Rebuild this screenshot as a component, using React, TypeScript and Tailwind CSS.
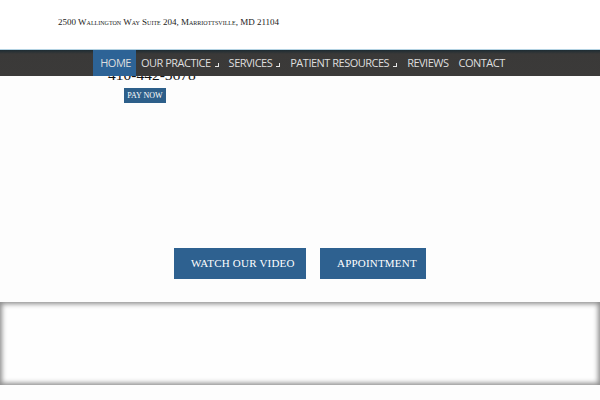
import React from "react";

const serif = { fontFamily: '"Liberation Serif", "DejaVu Serif", serif' };

function Caret() {
  return <span className="ml-[4px] inline-block h-[4px] w-[4px] border-b-[1.5px] border-r-[1.5px] border-[#e6e6e6] self-end mb-[9px]" />;
}

const items: { label: string; caret?: boolean; active?: boolean }[] = [
  { label: "HOME", active: true },
  { label: "OUR PRACTICE", caret: true },
  { label: "SERVICES", caret: true },
  { label: "PATIENT RESOURCES", caret: true },
  { label: "REVIEWS" },
  { label: "CONTACT" },
];

export default function App() {
  return (
    <div className="w-[600px] h-[400px] overflow-hidden bg-[#fdfdfd]">
      <div className="h-[49px] bg-white pl-[58px] pt-[16px]">
        <div className="text-[9px] text-[#222] [font-variant:small-caps] leading-[12px]" style={serif}>
          2500 Wallington Way Suite 204, Marriottsville, MD 21104
        </div>
      </div>
      <nav
        className="relative z-10 h-[27px] border-t border-[#b3d2e2] bg-[linear-gradient(to_bottom,#1d2c33_0px,#3a3938_4px,#3b3a39_100%)] flex justify-center pl-[3px]"
        style={{ fontFamily: '"Open Sans", sans-serif' }}
      >
        {items.map((it) => (
          <div
            key={it.label}
            className={`flex items-center h-full px-[5px] text-[11px] tracking-[-0.5px] text-[#dedede] ${it.active ? "bg-[#2d6396] pl-[7px]" : ""}`}
          >
            {it.label}
            {it.caret && <Caret />}
          </div>
        ))}
      </nav>
      <div className="relative -mt-[10px] pl-[108px]">
        <div className="text-[15.5px] leading-[18px] text-[#111]" style={serif}>410-442-5678</div>
        <div className="ml-[16px] mt-[4px] w-[42px] h-[15px] bg-[#2d5f8a] flex items-center justify-center text-[8px] text-white" style={serif}>
          PAY NOW
        </div>
      </div>
      <div className="mt-[145px] flex justify-center gap-[14px]" style={serif}>
        <div className="w-[132px] h-[31px] bg-[#2e6190] flex items-center pl-[17px] text-[11px] text-white tracking-[0.2px]">
          WATCH OUR VIDEO
        </div>
        <div className="w-[106px] h-[31px] bg-[#2e6190] flex items-center pl-[17px] text-[11px] text-white tracking-[0.2px]">
          APPOINTMENT
        </div>
      </div>
      <div className="mt-[23px] h-[83px] bg-[#fefefe] shadow-[inset_0_0_5px_2px_rgba(0,0,0,0.45)]" />
    </div>
  );
}
